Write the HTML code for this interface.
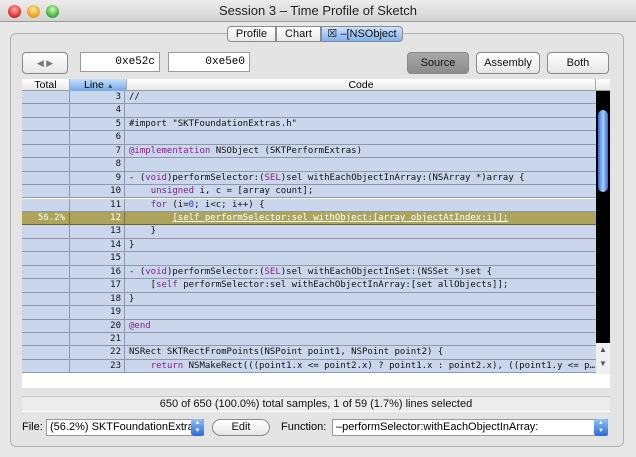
<!DOCTYPE html>
<html><head><meta charset="utf-8"><style>
*{margin:0;padding:0;box-sizing:border-box}
body{width:636px;height:457px;overflow:hidden;background:#e8e8e8;font-family:"Liberation Sans",sans-serif;position:relative}
.abs{position:absolute}
#title{left:0;top:0;width:636px;height:22px;background:linear-gradient(#ececec,#d3d3d3);border-bottom:1px solid #9a9a9a;text-align:center;font-size:13px;line-height:22px;color:#222}
.tl{top:5px;width:13px;height:13px;border-radius:50%}
#panel{left:10px;top:33px;width:614px;height:414px;border:1px solid #b0b0b0;border-radius:6px;background:#e4e4e4}
.tab{top:26px;height:16px;font-size:11px;line-height:15px;text-align:center;border:1px solid #8a8a8a;background:linear-gradient(#fff,#e8e8e8);color:#111}
.btn{height:22px;border:1px solid #8a8a8a;border-radius:4px;background:linear-gradient(#fff,#e6e6e6);font-size:11px;line-height:20px;text-align:center;color:#111}
.fld{height:20px;background:#fff;border:1px solid #9a9a9a;font-family:"Liberation Mono",monospace;font-size:11px;line-height:18px;text-align:right;padding-right:4px}
#hdr{left:22px;top:79px;width:588px;height:12px;background:linear-gradient(#fff,#e8e8e8);border-bottom:1px solid #999;font-size:10.5px;line-height:12px}
.row{left:22px;width:574px;height:13.45px;background:#cad6eb;border-bottom:1px solid #8f98a8;font-family:"DejaVu Sans Mono",monospace;font-size:9px;line-height:12.5px;color:#111;overflow:hidden}
.row span.t{position:absolute;left:0;width:48px;border-right:1px solid #8f98a8;height:100%;text-align:right;padding-right:4px}
.row span.n{position:absolute;left:48px;width:55px;border-right:1px solid #8f98a8;height:100%;text-align:right;padding-right:3px}
.row span.c{position:absolute;left:107px;white-space:pre}
.k{color:#8a1f8a}.b{color:#2040d0}
.hl{background:#ada45c;color:#fff}
</style></head><body>
<div id="title" class="abs">Session 3 – Time Profile of Sketch</div>
<div class="abs tl" style="left:8px;background:radial-gradient(circle at 50% 35%,#ffb0a8,#d22 70%)"></div>
<div class="abs tl" style="left:27px;background:radial-gradient(circle at 50% 35%,#ffe6a0,#e9a010 70%)"></div>
<div class="abs tl" style="left:46px;background:radial-gradient(circle at 50% 35%,#d0ffb0,#3a3 70%)"></div>
<div id="panel" class="abs"></div>
<div class="abs tab" style="left:227px;width:49px;border-radius:4px 0 0 4px">Profile</div>
<div class="abs tab" style="left:276px;width:45px">Chart</div>
<div class="abs tab" style="left:321px;width:82px;border-radius:0 4px 4px 0;background:linear-gradient(#cfe2fb,#7fb1ee)">☒ –[NSObject</div>
<div class="abs btn" style="left:22px;top:52px;width:46px;font-size:9px;color:#777">◀ ▶</div>
<div class="abs fld" style="left:80px;top:52px;width:80px">0xe52c</div>
<div class="abs fld" style="left:168px;top:52px;width:82px">0xe5e0</div>
<div class="abs btn" style="left:407px;top:52px;width:62px;background:linear-gradient(#a8a8a8,#8c8c8c);color:#111">Source</div>
<div class="abs btn" style="left:476px;top:52px;width:64px">Assembly</div>
<div class="abs btn" style="left:547px;top:52px;width:62px">Both</div>
<div id="hdr" class="abs">
<span class="abs" style="left:0;width:48px;text-align:center;border-right:1px solid #aaa;height:12px">Total</span>
<span class="abs" style="left:48px;width:56px;height:12px;background:linear-gradient(#c8e0fb,#72a8ea);padding-left:14px">Line <span style="font-size:7px;color:#357">▲</span></span>
<span class="abs" style="left:104px;width:470px;text-align:center;border-left:1px solid #aaa;border-right:1px solid #aaa;height:12px">Code</span>
</div>
<div class="abs" style="left:22px;top:91px;width:588px;height:297px;background:#fff"></div>
<div class="row abs" style="top:90.9px"><span class="t"></span><span class="n">3</span><span class="c">//</span></div>
<div class="row abs" style="top:104.35px"><span class="t"></span><span class="n">4</span><span class="c"></span></div>
<div class="row abs" style="top:117.8px"><span class="t"></span><span class="n">5</span><span class="c">#import "SKTFoundationExtras.h"</span></div>
<div class="row abs" style="top:131.25px"><span class="t"></span><span class="n">6</span><span class="c"></span></div>
<div class="row abs" style="top:144.7px"><span class="t"></span><span class="n">7</span><span class="c"><span class="k">@implementation</span> NSObject (SKTPerformExtras)</span></div>
<div class="row abs" style="top:158.15px"><span class="t"></span><span class="n">8</span><span class="c"></span></div>
<div class="row abs" style="top:171.6px"><span class="t"></span><span class="n">9</span><span class="c">- (<span class="k">void</span>)performSelector:(<span class="k">SEL</span>)sel withEachObjectInArray:(NSArray *)array {</span></div>
<div class="row abs" style="top:185.05px"><span class="t"></span><span class="n">10</span><span class="c">    <span class="k">unsigned</span> i, c = [array count];</span></div>
<div class="row abs" style="top:198.5px"><span class="t"></span><span class="n">11</span><span class="c">    <span class="k">for</span> (i=<span class="b">0</span>; i&lt;c; i++) {</span></div>
<div class="row abs hl" style="top:211.95px;border-bottom-color:#6a6430"><span class="t" style="border-color:#7a7440;font-size:9px">56.2%</span><span class="n" style="border-color:#7a7440">12</span><span class="c">        <u>[self performSelector:sel withObject:[array objectAtIndex:i]];</u></span></div>
<div class="row abs" style="top:225.4px"><span class="t"></span><span class="n">13</span><span class="c">    }</span></div>
<div class="row abs" style="top:238.85px"><span class="t"></span><span class="n">14</span><span class="c">}</span></div>
<div class="row abs" style="top:252.3px"><span class="t"></span><span class="n">15</span><span class="c"></span></div>
<div class="row abs" style="top:265.75px"><span class="t"></span><span class="n">16</span><span class="c">- (<span class="k">void</span>)performSelector:(<span class="k">SEL</span>)sel withEachObjectInSet:(NSSet *)set {</span></div>
<div class="row abs" style="top:279.2px"><span class="t"></span><span class="n">17</span><span class="c">    [<span class="k">self</span> performSelector:sel withEachObjectInArray:[set allObjects]];</span></div>
<div class="row abs" style="top:292.65px"><span class="t"></span><span class="n">18</span><span class="c">}</span></div>
<div class="row abs" style="top:306.1px"><span class="t"></span><span class="n">19</span><span class="c"></span></div>
<div class="row abs" style="top:319.55px"><span class="t"></span><span class="n">20</span><span class="c"><span class="k">@end</span></span></div>
<div class="row abs" style="top:333px"><span class="t"></span><span class="n">21</span><span class="c"></span></div>
<div class="row abs" style="top:346.45px"><span class="t"></span><span class="n">22</span><span class="c">NSRect SKTRectFromPoints(NSPoint point1, NSPoint point2) {</span></div>
<div class="row abs" style="top:359.9px"><span class="t"></span><span class="n">23</span><span class="c">    <span class="k">return</span> NSMakeRect(((point1.x &lt;= point2.x) ? point1.x : point2.x), ((point1.y &lt;= p…</span></div>
<div class="abs" style="left:596px;top:91px;width:14px;height:252px;background:#000"></div>
<div class="abs" style="left:598px;top:110px;width:10px;height:82px;border-radius:5px;background:linear-gradient(90deg,#2a6ad8,#a8d0ff 50%,#2a6ad8)"></div>
<div class="abs" style="left:596px;top:343px;width:14px;height:31px;background:#f0f0f0;font-size:8px;color:#555;text-align:center;line-height:14px">▲<br>▼</div>
<div class="abs" style="left:22px;top:396px;width:588px;height:16px;background:#ececec;border-top:1px solid #c8c8c8;border-bottom:1px solid #fff;font-size:11px;text-align:center;line-height:15px;color:#111">650 of 650 (100.0%) total samples, 1 of 59 (1.7%) lines selected</div>
<div class="abs" style="left:22px;top:421px;font-size:11px">File:</div>
<div class="abs" style="left:46px;top:419px;width:158px;height:17px;background:#fff;border:1px solid #999;font-size:11px;line-height:15px;padding-left:3px">(56.2%) SKTFoundationExtras</div>
<div class="abs" style="left:191px;top:419px;width:13px;height:17px;background:linear-gradient(#8cc0f8,#2a6ad8);border-radius:3px;color:#fff;font-size:6px;text-align:center;line-height:8px">▲<br>▼</div>
<div class="abs btn" style="left:212px;top:419px;width:58px;height:17px;border-radius:9px;line-height:15px">Edit</div>
<div class="abs" style="left:281px;top:421px;font-size:11px">Function:</div>
<div class="abs" style="left:332px;top:419px;width:276px;height:17px;background:#fff;border:1px solid #999;font-size:11px;line-height:15px;padding-left:3px">–performSelector:withEachObjectInArray:</div>
<div class="abs" style="left:594px;top:419px;width:14px;height:17px;background:linear-gradient(#8cc0f8,#2a6ad8);border-radius:3px;color:#fff;font-size:6px;text-align:center;line-height:8px">▲<br>▼</div>
</body></html>
